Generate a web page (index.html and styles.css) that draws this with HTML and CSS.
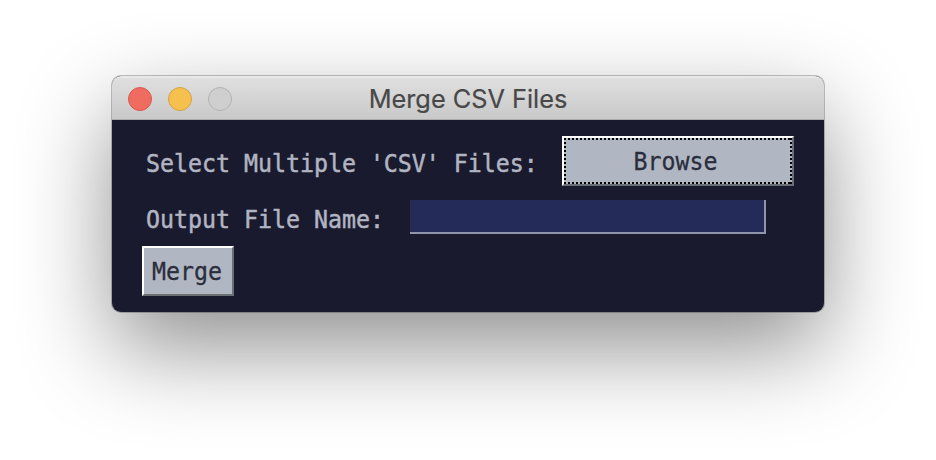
FILE: index.html
```html
<!DOCTYPE html>
<html lang="en">
<head>
<meta charset="utf-8">
<title>Merge CSV Files</title>
<link rel="stylesheet" href="styles.css">
</head>
<body>
<main class="window">
  <header class="titlebar">
    <div class="controls"><span class="dot close"></span><span class="dot minimize"></span><span class="dot zoom"></span></div>
    <h1 class="title">Merge CSV Files</h1>
  </header>
  <form class="content">
    <div class="row row-browse">
      <label class="label"><span class="text">Select Multiple 'CSV' Files:</span></label>
      <button type="button" class="button browse"><span class="focus"><span class="text centered">Browse</span></span></button>
    </div>
    <div class="row row-output">
      <label class="label" for="output"><span class="text">Output File Name:</span></label>
      <input class="field" id="output" type="text">
    </div>
    <button type="button" class="button merge"><span class="text centered">Merge</span></button>
  </form>
</main>
</body>
</html>
```
FILE: styles.css
```css
* { box-sizing: border-box; }
body {
  margin: 0;
  padding: 76px 112px 0;
  height: 460px;
  overflow: hidden;
  background: #fff;
}
.window {
  width: 712px;
  height: 235.5px;
  border-radius: 9px;
  background: #1a1a2e;
  box-shadow: 0 0 0 1px rgba(0, 0, 0, .23), 0 36px 92px rgba(0, 0, 0, .44);
}
.titlebar {
  display: grid;
  grid-template-columns: 120px 1fr 120px;
  align-items: center;
  height: 44px;
  padding: 0 16px;
  border-radius: 9px 9px 0 0;
  border-top: 2px solid #e8e8e8;
  border-bottom: 1px solid #aaa;
  background: linear-gradient(#dfdfdf, #c9c9c9);
}
.controls { display: flex; gap: 16px; }
.dot { width: 24px; height: 24px; border-radius: 50%; border: 1px solid; }
.close { background: #f06b60; border-color: #d95950; }
.minimize { background: #f6c04f; border-color: #d6a243; }
.zoom { background: #cfcfcf; border-color: #b2b2b2; }
.title {
  margin: 0;
  text-align: center;
  white-space: nowrap;
  font: 400 25.3px/40px Inter, sans-serif;
  color: #484848;
  -webkit-text-stroke: .2px;
}
.content {
  display: flex;
  flex-direction: column;
  align-items: flex-start;
  padding: 16px 30px 0;
  font: 24.6px/28px "DejaVu Sans Mono", monospace;
}
.text {
  display: inline-block;
  white-space: pre;
  transform: translateY(1px) scaleX(.945);
  transform-origin: 0 50%;
}
.text.centered { transform-origin: 50% 50%; }
.row { display: flex; }
.label { color: #b1b5c2; padding-left: 4px; -webkit-text-stroke: .5px; }
.row-browse { height: 50px; }
.row-browse .label { width: 420px; padding-top: 13px; }
.row-output { height: 60px; }
.row-output .label { width: 268px; padding-top: 19px; }
.button {
  display: flex;
  align-items: center;
  justify-content: center;
  padding: 0;
  height: 50px;
  border: 2px solid;
  border-color: #fff #6b7077 #6b7077 #fff;
  background: #b1b6c3;
  color: #2a2e3c;
  font: inherit;
  -webkit-text-stroke: .3px;
}
.browse { width: 232px; }
.focus {
  display: block;
  width: 100%;
  height: 46px;
  line-height: 46px;
  padding-right: 5px;
  background:
    repeating-linear-gradient(90deg, #000 0 2px, transparent 2px 4px) 0 0 / 100% 2px no-repeat,
    repeating-linear-gradient(90deg, #000 0 2px, transparent 2px 4px) 0 100% / 100% 2px no-repeat,
    repeating-linear-gradient(#000 0 2px, transparent 2px 4px) 0 0 / 2px 100% no-repeat,
    repeating-linear-gradient(#000 0 2px, transparent 2px 4px) 100% 0 / 2px 100% no-repeat;
}
.merge { width: 92px; line-height: 46px; padding-right: 2px; }
.field {
  width: 356px;
  height: 34px;
  margin-top: 14px;
  border: 0 solid #9195ab;
  border-width: 0 2px 2px 0;
  border-radius: 0;
  padding: 0 4px;
  outline: 0;
  background: #242b58;
  color: #b1b5c2;
  font: inherit;
}
```
